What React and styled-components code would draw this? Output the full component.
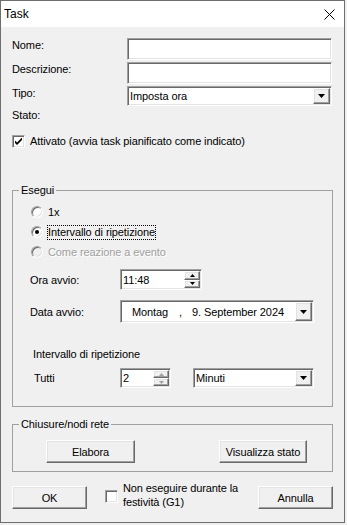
import React from 'react'
import styled, { createGlobalStyle, css } from 'styled-components'

const GlobalStyle = createGlobalStyle`
  html, body {
    margin: 0;
    background: #f0f0f0;
  }
  body {
    font-family: "Liberation Sans", Arial, sans-serif;
    font-size: 11px;
    letter-spacing: -0.1px;
    color: #000;
  }
`

const sunken = css`
  box-sizing: border-box;
  border: 1px solid;
  border-color: #a0a0a0 #fff #fff #a0a0a0;
  box-shadow: inset 1px 1px 0 #696969, inset -1px -1px 0 #e3e3e3;
  background: #fff;
`

const raised = css`
  box-sizing: border-box;
  border: 1px solid;
  border-color: #fff #696969 #696969 #fff;
  box-shadow: inset -1px -1px 0 #a0a0a0, inset 1px 1px 0 #e3e3e3;
  background: #f0f0f0;
`

const Window = styled.div`
  width: 345px;
  height: 523px;
  box-sizing: border-box;
  border: 1px solid #6e6e6e;
  background: #f0f0f0;
  display: flex;
  flex-direction: column;
`

const TitleBar = styled.div`
  height: 26px;
  flex: none;
  background: #fff;
  display: flex;
  align-items: center;
  justify-content: space-between;
  padding: 0 9px 0 3px;
  font-size: 12px;
  letter-spacing: 0;
`

const Body = styled.div`
  flex: 1;
  padding: 11px 11px 0 11px;
`

const FormGrid = styled.div`
  display: grid;
  grid-template-columns: 115px 205px;
  grid-template-rows: 22px 22px 20px 14px;
  row-gap: 2px;
`

const Label = styled.div`
  line-height: 14px;
  white-space: nowrap;
  width: ${p => (p.w ? `${p.w}px` : 'auto')};
  flex: none;
`

const TextBox = styled.div`
  ${sunken};
  height: ${p => p.h || 22}px;
  width: ${p => (p.w ? `${p.w}px` : '100%')};
`

const Combo = styled.div`
  ${sunken};
  height: ${p => p.h || 20}px;
  width: ${p => (p.w ? `${p.w}px` : '100%')};
  margin-left: ${p => p.gap || 0}px;
  padding: 1px;
  display: flex;
  align-items: center;
`

const ComboText = styled.div`
  flex: 1;
  padding-left: ${p => p.pad || 1}px;
  line-height: 14px;
  white-space: nowrap;
  display: flex;
`

const DateSep = styled.span`
  margin-left: ${p => p.gap}px;
`

const DropButton = styled.div`
  ${raised};
  width: 17px;
  height: 100%;
  display: flex;
  align-items: center;
  justify-content: center;
`

const SpinBox = styled.div`
  ${sunken};
  width: ${p => p.w}px;
  height: ${p => p.h}px;
  padding: 1px;
  display: flex;
  flex: none;
`

const SpinText = styled.div`
  flex: 1;
  padding-left: 1px;
  display: flex;
  align-items: center;
`

const SpinColumn = styled.div`
  width: 16px;
  display: flex;
  flex-direction: column;
`

const SpinHalf = styled.div`
  ${raised};
  flex: 1;
  display: flex;
  align-items: center;
  justify-content: center;
`

const CheckRow = styled.div`
  margin-top: 13px;
  display: flex;
  align-items: center;
  gap: 5px;
  height: 13px;
  line-height: 13px;
`

const CheckBox = styled.span`
  ${sunken};
  width: 13px;
  height: 13px;
  flex: none;
  display: inline-flex;
  align-items: center;
  justify-content: center;
`

const Group = styled.fieldset`
  margin: ${p => p.top}px 0 0 0;
  padding: 0 0 ${p => p.bottom}px 0;
  border: 1px solid #a0a0a0;
  min-inline-size: 0;
`

const Legend = styled.legend`
  margin-left: 6px;
  padding: 0 2px;
  line-height: 14px;
`

const RadioList = styled.div`
  margin-top: 5px;
  padding-left: 18px;
`

const RadioRow = styled.div`
  height: 20px;
  display: flex;
  align-items: center;
  gap: 5px;
  color: ${p => (p.disabled ? '#a0a0a0' : '#000')};
  text-shadow: ${p => (p.disabled ? '1px 1px 0 #fff' : 'none')};
`

const Radio = styled.span`
  box-sizing: border-box;
  width: 12px;
  height: 12px;
  flex: none;
  border-radius: 50%;
  border: 1px solid;
  border-color: #a0a0a0 #fff #fff #a0a0a0;
  box-shadow: inset 1px 1px 0 #696969, inset -1px -1px 0 #e3e3e3;
  background: ${p => (p.disabled ? '#f0f0f0' : '#fff')};
  display: flex;
  align-items: center;
  justify-content: center;
  &::after {
    content: '';
    width: 4px;
    height: 4px;
    border-radius: 50%;
    background: #000;
    display: ${p => (p.checked ? 'block' : 'none')};
  }
`

const Focused = styled.span`
  outline: 1px dotted #000;
  line-height: 13px;
`

const FieldRow = styled.div`
  margin-top: ${p => p.top}px;
  padding-left: ${p => p.indent}px;
  display: flex;
  align-items: center;
`

const SubTitle = styled.div`
  margin-top: 24px;
  padding-left: 20px;
  line-height: 14px;
`

const ButtonRow = styled.div`
  margin-top: 9px;
  padding-left: 33px;
  display: flex;
  gap: 84px;
`

const Button = styled.div`
  ${raised};
  width: ${p => p.w}px;
  height: 23px;
  flex: none;
  display: flex;
  align-items: center;
  justify-content: center;
`

const Footer = styled.div`
  margin-top: 9px;
  display: flex;
  align-items: flex-start;
`

const FooterButton = styled(Button)`
  margin-top: 5px;
  margin-left: ${p => (p.right ? 'auto' : '0')};
`

const FooterCheck = styled(CheckBox)`
  margin: 9px 0 0 18px;
`

const FooterLabel = styled.div`
  margin-left: 5px;
  width: 130px;
  line-height: 14px;
`

const Tri = ({ up, w = 7, h = 4, color = '#000' }) => (
  <svg width={w} height={h} viewBox={`0 0 ${w} ${h}`}>
    <polygon
      points={up ? `0,${h} ${w / 2},0 ${w},${h}` : `0,0 ${w},0 ${w / 2},${h}`}
      fill={color}
    />
  </svg>
)

const Close = () => (
  <svg width="11" height="11" viewBox="0 0 11 11">
    <path d="M0.5 0.5 L10.5 10.5 M10.5 0.5 L0.5 10.5" stroke="#000" strokeWidth="1" />
  </svg>
)

const Check = () => (
  <svg width="7" height="7" viewBox="0 0 7 7">
    <path d="M0 2 L2 4 L7 -1 L7 1.5 L2 6.5 L0 4.5 Z" fill="#000" transform="translate(0 0.5)" />
  </svg>
)

const Select = ({ value, w, h, pad, gap }) => (
  <Combo w={w} h={h} gap={gap}>
    <ComboText pad={pad}>{value}</ComboText>
    <DropButton>
      <Tri />
    </DropButton>
  </Combo>
)

const Spin = ({ value, w, h, disabled }) => (
  <SpinBox w={w} h={h}>
    <SpinText>{value}</SpinText>
    <SpinColumn>
      <SpinHalf>
        <Tri up w={5} h={3} color={disabled ? '#a0a0a0' : '#000'} />
      </SpinHalf>
      <SpinHalf>
        <Tri w={5} h={3} color={disabled ? '#a0a0a0' : '#000'} />
      </SpinHalf>
    </SpinColumn>
  </SpinBox>
)

const App = () => {
  return (
    <>
      <GlobalStyle />
      <Window>
        <TitleBar>
          <span>Task</span>
          <Close />
        </TitleBar>
        <Body>
          <FormGrid>
            <Label>Nome:</Label>
            <TextBox />
            <Label>Descrizione:</Label>
            <TextBox />
            <Label>Tipo:</Label>
            <Select value="Imposta ora" />
            <Label>Stato:</Label>
          </FormGrid>

          <CheckRow>
            <CheckBox>
              <Check />
            </CheckBox>
            <span>Attivato (avvia task pianificato come indicato)</span>
          </CheckRow>

          <Group top={35} bottom={18}>
            <Legend>Esegui</Legend>
            <RadioList>
              <RadioRow>
                <Radio />
                <span>1x</span>
              </RadioRow>
              <RadioRow>
                <Radio checked />
                <Focused>Intervallo di ripetizione</Focused>
              </RadioRow>
              <RadioRow disabled>
                <Radio disabled />
                <span>Come reazione a evento</span>
              </RadioRow>
            </RadioList>

            <FieldRow top={7} indent={17}>
              <Label w={90}>Ora avvio:</Label>
              <Spin value="11:48" w={82} h={21} />
            </FieldRow>

            <FieldRow top={10} indent={17}>
              <Label w={90}>Data avvio:</Label>
              <Select
                w={194}
                h={23}
                pad={10}
                value={
                  <>
                    <span>Montag</span>
                    <DateSep gap={11}>,</DateSep>
                    <DateSep gap={10}>9. September 2024</DateSep>
                  </>
                }
              />
            </FieldRow>

            <SubTitle>Intervallo di ripetizione</SubTitle>

            <FieldRow top={7} indent={21}>
              <Label w={86}>Tutti</Label>
              <Spin value="2" w={51} h={20} disabled />
              <Select value="Minuti" w={121} h={20} gap={22} />
            </FieldRow>
          </Group>

          <Group top={10} bottom={8}>
            <Legend>Chiusure/nodi rete</Legend>
            <ButtonRow>
              <Button w={89}>Elabora</Button>
              <Button w={88}>Visualizza stato</Button>
            </ButtonRow>
          </Group>

          <Footer>
            <FooterButton w={75}>OK</FooterButton>
            <FooterCheck />
            <FooterLabel>Non eseguire durante la festività (G1)</FooterLabel>
            <FooterButton w={75} right>
              Annulla
            </FooterButton>
          </Footer>
        </Body>
      </Window>
    </>
  )
}

export default App
